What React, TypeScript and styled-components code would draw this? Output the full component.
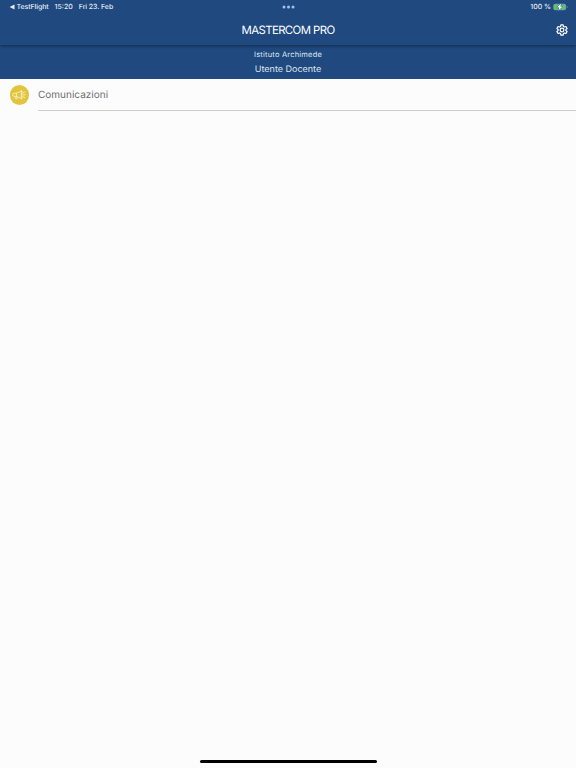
import React from "react";
import styled, { createGlobalStyle } from "styled-components";

const GlobalStyle = createGlobalStyle`
  * { box-sizing: border-box; }
  body { margin: 0; background: #fcfcfc; }
`;

const Screen = styled.div`
  display: flex;
  flex-direction: column;
  width: 100%;
  height: 100vh;
  overflow: hidden;
  background: #fcfcfc;
  font-family: Inter, "Liberation Sans", sans-serif;
  text-rendering: geometricPrecision;
`;

const Header = styled.header`
  position: relative;
  z-index: 1;
  flex: none;
  height: 45px;
  background: #1f497f;
  box-shadow: 0 1px 3px rgba(0, 0, 0, 0.42);
  color: #fff;
`;

const StatusBar = styled.div`
  display: grid;
  grid-template-columns: 1fr auto 1fr;
  align-items: center;
  height: 14px;
  padding: 0 8px 0 9px;
  color: #e6edf5;
  font-size: 7px;
  font-weight: 500;
  line-height: 14px;
  white-space: nowrap;
`;

const StatusLeft = styled.div`
  display: flex;
  align-items: center;
`;

const StatusText = styled.span<{ $gap?: number; $spacing?: number }>`
  margin-left: ${({ $gap = 0 }) => $gap}px;
  letter-spacing: ${({ $spacing = 0 }) => $spacing}px;
`;

const StatusRight = styled.div`
  display: flex;
  align-items: center;
  justify-content: flex-end;
  gap: 2px;
`;

const Dots = styled.svg`
  display: block;
  margin-right: 1px;
`;

const TitleBar = styled.div`
  display: grid;
  grid-template-columns: 1fr auto 1fr;
  align-items: center;
  height: 31px;
  padding: 0 8px;
`;

const Title = styled.h1`
  grid-column: 2;
  margin: 0;
  font-size: 11.4px;
  font-weight: 400;
  line-height: 16px;
  letter-spacing: -0.6px;
`;

const SettingsButton = styled.button`
  display: flex;
  justify-self: end;
  padding: 0;
  border: 0;
  background: none;
  color: #fff;
`;

const Account = styled.section`
  display: flex;
  flex: none;
  flex-direction: column;
  align-items: center;
  height: 34px;
  padding-top: 4px;
  background: #1f497f;
  color: #dce5ef;
`;

const School = styled.div`
  font-size: 7.5px;
  line-height: 12px;
  letter-spacing: 0.2px;
`;

const UserName = styled.div`
  margin-top: 1px;
  font-size: 9px;
  line-height: 15px;
`;

const Menu = styled.main`
  flex: 1;
`;

const MenuRow = styled.div`
  display: flex;
  height: 32px;
  padding-left: 9px;
`;

const MenuIcon = styled.div`
  display: flex;
  align-items: center;
  justify-content: center;
  flex: none;
  width: 19.5px;
  height: 19.5px;
  margin: 6px 9px 0 0.5px;
  border-radius: 50%;
  background: #e2c53e;
`;

const MenuLabel = styled.div`
  flex: 1;
  border-bottom: 1px solid #cecece;
  color: #707070;
  font-size: 10px;
  line-height: 32px;
  letter-spacing: 0.01px;
`;

const HomeArea = styled.footer`
  display: flex;
  justify-content: center;
  flex: none;
  height: 8px;
`;

const HomeIndicator = styled.div`
  width: 177px;
  height: 3px;
  border-radius: 2px;
  background: #000;
`;

const BackArrow = () => (
  <svg width="6" height="6" viewBox="0 0 6 6">
    <path d="M.6 3 5.5.5v5Z" fill="currentColor" />
  </svg>
);

const MultitaskDots = () => (
  <Dots width="13" height="4" viewBox="0 0 13 4" fill="#a3c2e8">
    <circle cx="2" cy="2" r="1.5" />
    <circle cx="6.5" cy="2" r="1.5" />
    <circle cx="11" cy="2" r="1.5" />
  </Dots>
);

const Battery = () => (
  <svg width="15" height="8" viewBox="0 0 15 8">
    <rect x=".3" y=".8" width="12.8" height="6.4" rx="1.9" fill="#7892b2" />
    <rect x="1.1" y="1.5" width="11.2" height="5" rx="1.2" fill="#55ca62" />
    <path d="M13.9 3v2q.8-.3.8-1t-.8-1Z" fill="#8199b5" />
    <path d="M8.3.3 3.9 4.6h2.3L5.2 7.8 9.7 3.4H7.3Z" fill="#fff" stroke="#1f497f" strokeWidth="1" paintOrder="stroke" />
  </svg>
);

const Gear = () => (
  <svg width="12" height="12" viewBox="0 0 24 24" fill="none" stroke="currentColor" strokeWidth="2.4" strokeLinejoin="round">
    <path d="M9.7 1.8h4.6l.5 3.1 2.1 1.2 3-1.1 2.3 4-2.5 1.9v2.3l2.5 1.9-2.3 4-3-1.2-2.1 1.2-.5 3.1H9.7l-.5-3.1-2.1-1.2-3 1.2-2.3-4 2.5-1.9v-2.3L1.8 9l2.3-4 3 1.1 2.1-1.2Z" />
    <circle cx="12" cy="12" r="3.7" />
  </svg>
);

const Megaphone = () => (
  <svg width="14" height="12" viewBox="0 0 14 12" fill="none" stroke="#f7edba" strokeWidth=".9" strokeLinecap="round" strokeLinejoin="round">
    <path d="M9 2.3 4.4 4.2H2.2Q.6 4.4.6 5.8t1.5 1.6h2.3L9 9.3ZM4.4 4.2v3.2M2.8 7.5l1 2.3h1.5l-.7-2.2M9 1.8h1v8H9" />
    <path d="m11.2 3.8 1.7-.8M11.4 5.8h2M11.2 7.8l1.7.8" />
  </svg>
);

export default function App() {
  return (
    <Screen>
      <GlobalStyle />
      <Header>
        <StatusBar>
          <StatusLeft>
            <BackArrow />
            <StatusText $gap={1.5} $spacing={-0.08}>TestFlight</StatusText>
            <StatusText $gap={6}>15:20</StatusText>
            <StatusText $gap={6} $spacing={-0.07}>Fri 23. Feb</StatusText>
          </StatusLeft>
          <MultitaskDots />
          <StatusRight>
            <StatusText>100 %</StatusText>
            <Battery />
          </StatusRight>
        </StatusBar>
        <TitleBar>
          <Title>MASTERCOM PRO</Title>
          <SettingsButton aria-label="Impostazioni"><Gear /></SettingsButton>
        </TitleBar>
      </Header>
      <Account>
        <School>Istituto Archimede</School>
        <UserName>Utente Docente</UserName>
      </Account>
      <Menu>
        <MenuRow>
          <MenuIcon><Megaphone /></MenuIcon>
          <MenuLabel>Comunicazioni</MenuLabel>
        </MenuRow>
      </Menu>
      <HomeArea><HomeIndicator /></HomeArea>
    </Screen>
  );
}
